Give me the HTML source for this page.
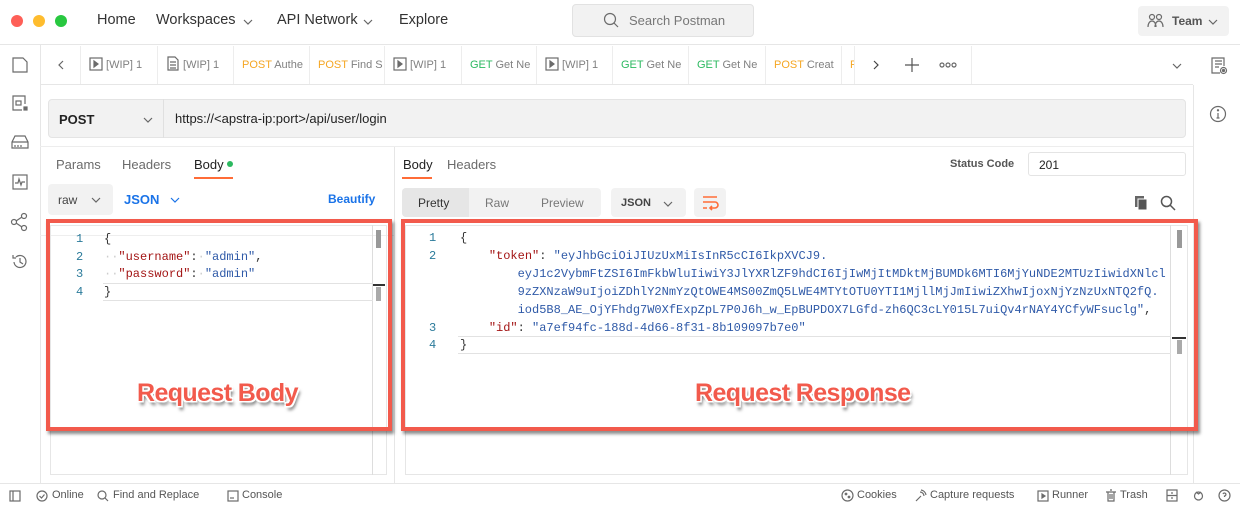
<!DOCTYPE html>
<html><head><meta charset="utf-8"><style>
*{box-sizing:border-box;margin:0;padding:0}
body{width:1240px;height:508px;overflow:hidden;background:#fff;font-family:"Liberation Sans",sans-serif;color:#212121;position:relative}
.a{position:absolute}
.t{font-size:13px;color:#6b6b6b}
.mono{font-family:"Liberation Mono",monospace;font-size:12px;white-space:pre}
.tab{position:absolute;top:46px;height:38px;border-right:1px solid #ededed;font-size:11px;color:#808080;line-height:38px;padding-left:8px;overflow:hidden;white-space:nowrap}
.post{color:#f5a623}.get{color:#2cb960}
.k{color:#a31515}.s{color:#2f5aa8}.n{color:#2a7a9a}
.lbl{font-family:"Liberation Sans",sans-serif;font-weight:bold;font-size:25px;color:#f25a4c;letter-spacing:-0.6px;text-shadow:-1.5px -1.5px 0 #fff,1.5px -1.5px 0 #fff,-1.5px 1.5px 0 #fff,1.5px 1.5px 0 #fff,2px 4px 3px rgba(0,0,0,.55)}
.ico{position:absolute;stroke:#6b6b6b;fill:none;stroke-width:1.2}
.chev{position:absolute;stroke:#666;fill:none;stroke-width:1.2}
.sb{position:absolute;top:489px;font-size:11px;color:#555}
.nav{position:absolute;top:12px;font-size:14.5px;color:#333}
</style></head><body>
<!-- top bar -->
<div class="a" style="left:0;top:44px;width:1240px;height:1px;background:#e6e6e6"></div>
<div class="a" style="left:11px;top:15px;width:12px;height:12px;border-radius:6px;background:#fe5f57"></div>
<div class="a" style="left:33px;top:15px;width:12px;height:12px;border-radius:6px;background:#febc2e"></div>
<div class="a" style="left:55px;top:15px;width:12px;height:12px;border-radius:6px;background:#28c840"></div>
<div class="nav" style="left:97px">Home</div>
<div class="nav" style="left:156px">Workspaces</div>
<svg class="chev" style="left:243px;top:19px" width="10" height="6"><path d="M1 1l4 4 4-4"/></svg>
<div class="nav" style="left:277px">API Network</div>
<svg class="chev" style="left:363px;top:19px" width="10" height="6"><path d="M1 1l4 4 4-4"/></svg>
<div class="nav" style="left:399px">Explore</div>
<div class="a" style="left:572px;top:4px;width:182px;height:33px;background:#f2f2f2;border:1px solid #e2e2e2;border-radius:4px"></div>
<svg class="ico" style="left:603px;top:12px" width="16" height="16"><circle cx="7" cy="7" r="5.5"/><path d="M11 11l4 4"/></svg>
<div class="a" style="left:629px;top:13px;font-size:13px;color:#777">Search Postman</div>
<div class="a" style="left:1138px;top:6px;width:91px;height:30px;background:#f2f2f2;border-radius:4px"></div>
<svg class="ico" style="left:1147px;top:13px" width="18" height="16"><circle cx="5" cy="4" r="2.5"/><circle cx="12" cy="4" r="2.5"/><path d="M1 14c0-4 2-6 4-6s4 2 4 6M8 14c0-4 2-6 4-6s4 2 4 6"/></svg>
<div class="a" style="left:1172px;top:14px;font-size:12px;font-weight:bold;color:#555">Team</div>
<svg class="chev" style="left:1208px;top:19px" width="10" height="6"><path d="M1 1l4 4 4-4"/></svg>

<!-- left sidebar -->
<div class="a" style="left:40px;top:45px;width:1px;height:438px;background:#e6e6e6"></div>
<svg class="ico" style="left:11px;top:56px" width="18" height="18"><path d="M2 2h10l4 4v10H2z"/></svg>
<svg class="ico" style="left:11px;top:94px" width="18" height="18"><path d="M14 10V2H2v14h9"/><rect x="5" y="7" width="5" height="4"/><rect x="13" y="13" width="3" height="3" fill="#6b6b6b"/></svg>
<svg class="ico" style="left:10px;top:134px" width="20" height="16"><path d="M2 8l3-6h10l3 6v6H2z M2 8h16M5 11v2M8 11v2M11 11v2"/></svg>
<svg class="ico" style="left:11px;top:173px" width="18" height="18"><rect x="2" y="2" width="14" height="14"/><path d="M4 10h3l1-4 2 6 1-3h3"/></svg>
<svg class="ico" style="left:10px;top:212px" width="20" height="20"><circle cx="4" cy="10" r="2.5"/><circle cx="14" cy="4" r="2.5"/><circle cx="14" cy="16" r="2.5"/><path d="M6 9l6-4M6 11l6 4"/></svg>
<svg class="ico" style="left:10px;top:252px" width="20" height="20"><path d="M4 10a6 6 0 1 0 2-5M3 3v3h3M10 6v4l3 2"/></svg>

<!-- tab bar -->
<div class="a" style="left:40px;top:84px;width:1153px;height:1px;background:#e6e6e6"></div>
<div class="a" style="left:80px;top:46px;width:1px;height:38px;background:#ededed"></div>
<svg class="chev" style="left:58px;top:60px" width="6" height="10"><path d="M5 1L1 5l4 4"/></svg>
<div class="tab" style="left:81px;width:77px"><svg class="ico" style="position:relative;top:3px" width="14" height="14"><rect x="1" y="1" width="12" height="12"/><path d="M5 4l4 3-4 3z" fill="#6b6b6b"/></svg> [WIP] 1</div>
<div class="tab" style="left:158px;width:76px"><svg class="ico" style="position:relative;top:3px" width="14" height="15"><path d="M2 1h7l3 3v10H2zM4 6h6M4 9h6M4 12h6"/></svg> [WIP] 1</div>
<div class="tab" style="left:234px;width:76px"><span class="post">POST</span> Authe</div>
<div class="tab" style="left:310px;width:75px"><span class="post">POST</span> Find S</div>
<div class="tab" style="left:385px;width:77px"><svg class="ico" style="position:relative;top:3px" width="14" height="14"><rect x="1" y="1" width="12" height="12"/><path d="M5 4l4 3-4 3z" fill="#6b6b6b"/></svg> [WIP] 1</div>
<div class="tab" style="left:462px;width:75px"><span class="get">GET</span> Get Ne</div>
<div class="tab" style="left:537px;width:76px"><svg class="ico" style="position:relative;top:3px" width="14" height="14"><rect x="1" y="1" width="12" height="12"/><path d="M5 4l4 3-4 3z" fill="#6b6b6b"/></svg> [WIP] 1</div>
<div class="tab" style="left:613px;width:76px"><span class="get">GET</span> Get Ne</div>
<div class="tab" style="left:689px;width:77px"><span class="get">GET</span> Get Ne</div>
<div class="tab" style="left:766px;width:76px"><span class="post">POST</span> Creat</div>
<div class="tab" style="left:842px;width:13px"><span class="post">P</span></div>
<svg class="chev" style="left:873px;top:60px;stroke:#444" width="6" height="10"><path d="M1 1l4 4-4 4"/></svg>
<svg class="chev" style="left:905px;top:58px;stroke:#555" width="14" height="14"><path d="M7 0v14M0 7h14"/></svg>
<svg class="chev" style="left:939px;top:62px" width="18" height="6"><circle cx="3" cy="3" r="2"/><circle cx="9" cy="3" r="2"/><circle cx="15" cy="3" r="2"/></svg>
<div class="a" style="left:971px;top:46px;width:1px;height:38px;background:#ededed"></div>
<svg class="chev" style="left:1172px;top:63px" width="10" height="6"><path d="M1 1l4 4 4-4"/></svg>
<svg class="ico" style="left:1210px;top:56px" width="18" height="20"><path d="M14 10V2H2v15h8M5 5h7M5 8h7M5 11h4"/><circle cx="13.5" cy="14.5" r="3"/><circle cx="13.5" cy="14.5" r="1" fill="#6b6b6b"/></svg>

<!-- right sidebar -->
<div class="a" style="left:1193px;top:85px;width:1px;height:398px;background:#e6e6e6"></div>
<svg class="ico" style="left:1209px;top:105px" width="18" height="18"><circle cx="9" cy="9" r="7.5"/><path d="M9 8v5M7.5 13h3"/><circle cx="9" cy="5.3" r=".6" fill="#6b6b6b"/></svg>

<!-- URL bar -->
<div class="a" style="left:48px;top:99px;width:1138px;height:39px;background:#f2f2f2;border:1px solid #e4e4e4;border-radius:4px"></div>
<div class="a" style="left:163px;top:99px;width:1px;height:39px;background:#e0e0e0"></div>
<div class="a" style="left:59px;top:112px;font-size:13px;font-weight:bold;color:#222">POST</div>
<svg class="chev" style="left:143px;top:117px" width="10" height="6"><path d="M1 1l4 4 4-4"/></svg>
<div class="a" style="left:175px;top:111px;font-size:13px;color:#222">https://&lt;apstra-ip:port&gt;/api/user/login</div>

<!-- request panel -->
<div class="a" style="left:40px;top:146px;width:1153px;height:1px;background:#ededed"></div>
<div class="a t" style="left:56px;top:157px">Params</div>
<div class="a t" style="left:122px;top:157px">Headers</div>
<div class="a" style="left:194px;top:157px;font-size:13px;color:#222">Body</div>
<div class="a" style="left:227px;top:161px;width:6px;height:6px;border-radius:3px;background:#2cb960"></div>
<div class="a" style="left:194px;top:177px;width:39px;height:2px;background:#ff6c37"></div>
<div class="a" style="left:394px;top:147px;width:1px;height:336px;background:#e6e6e6"></div>
<div class="a" style="left:48px;top:184px;width:65px;height:31px;background:#f2f2f2;border-radius:4px"></div>
<div class="a" style="left:58px;top:193px;font-size:12px;color:#444">raw</div>
<svg class="chev" style="left:91px;top:197px" width="10" height="6"><path d="M1 1l4 4 4-4"/></svg>
<div class="a" style="left:124px;top:192px;font-size:13px;font-weight:bold;color:#1a73e8">JSON</div>
<svg class="chev" style="left:170px;top:197px;stroke:#1a73e8" width="10" height="6"><path d="M1 1l4 4 4-4"/></svg>
<div class="a" style="left:328px;top:192px;font-size:12px;font-weight:bold;color:#1a73e8">Beautify</div>
<div class="a" style="left:40px;top:235px;width:354px;height:1px;background:#eee"></div>
<!-- request editor -->
<div class="a" style="left:50px;top:225px;width:337px;height:250px;border:1px solid #e6e6e6"></div>
<div class="a" style="left:372px;top:225px;width:1px;height:250px;background:#ddd"></div>
<div class="a" style="left:103px;top:283px;width:270px;height:18px;border-top:1px solid #e2e2e2;border-bottom:1px solid #e2e2e2"></div>
<div class="a" style="left:376px;top:230px;width:5px;height:18px;background:#999"></div>
<div class="a" style="left:373px;top:284px;width:12px;height:2px;background:#333"></div>
<div class="a" style="left:376px;top:287px;width:5px;height:14px;background:#aaa"></div>
<div class="a mono n" style="left:76px;top:231px;line-height:17.7px">1
2
3
4</div>
<div class="a mono" style="left:104px;top:231px;line-height:17.7px;color:#333">{
<span style="color:#ccc">··</span><span class="k">"username"</span>:<span style="color:#ccc">·</span><span class="s">"admin"</span>,
<span style="color:#ccc">··</span><span class="k">"password"</span>:<span style="color:#ccc">·</span><span class="s">"admin"</span>
}</div>
<div class="a" style="left:46px;top:219px;width:346px;height:212px;border:4px solid #f25a4c;box-shadow:2px 3px 3px rgba(0,0,0,.45)"></div>
<div class="a lbl" style="left:137px;top:379px">Request Body</div>

<!-- response panel -->
<div class="a" style="left:403px;top:157px;font-size:13px;color:#222">Body</div>
<div class="a t" style="left:447px;top:157px">Headers</div>
<div class="a" style="left:402px;top:177px;width:30px;height:2px;background:#ff6c37"></div>
<div class="a" style="left:950px;top:158px;font-size:11px;font-weight:bold;color:#555">Status Code</div>
<div class="a" style="left:1028px;top:152px;width:158px;height:24px;border:1px solid #e4e4e4;border-radius:3px;font-size:12px;padding:5px 10px;color:#222">201</div>
<div class="a" style="left:402px;top:188px;width:199px;height:29px;background:#f2f2f2;border-radius:4px"></div>
<div class="a" style="left:402px;top:188px;width:67px;height:29px;background:#e6e6e6;border-radius:4px 0 0 4px"></div>
<div class="a" style="left:418px;top:196px;font-size:12px;color:#333">Pretty</div>
<div class="a" style="left:485px;top:196px;font-size:12px;color:#777">Raw</div>
<div class="a" style="left:541px;top:196px;font-size:12px;color:#777">Preview</div>
<div class="a" style="left:611px;top:188px;width:75px;height:29px;background:#f2f2f2;border-radius:4px"></div>
<div class="a" style="left:621px;top:197px;font-size:11px;font-weight:bold;color:#444">JSON</div>
<svg class="chev" style="left:663px;top:201px" width="10" height="6"><path d="M1 1l4 4 4-4"/></svg>
<div class="a" style="left:694px;top:188px;width:32px;height:29px;background:#f2f2f2;border-radius:4px"></div>
<svg class="a" style="left:701px;top:194px" width="18" height="18" fill="none" stroke="#ff6c37" stroke-width="1.6"><path d="M2 3h14M2 8h12a3 3 0 0 1 0 6H9M11 12l-2 2 2 2M2 14h4"/></svg>
<svg class="a" style="left:1133px;top:195px" width="16" height="16"><rect x="2" y="1" width="9" height="11" fill="#666"/><rect x="5" y="4" width="9" height="11" fill="#555" stroke="#fff"/></svg>
<svg class="ico" style="left:1160px;top:195px;stroke:#555;stroke-width:1.5" width="16" height="16"><circle cx="6.5" cy="6.5" r="5"/><path d="M10 10l5 5"/></svg>
<!-- response editor -->
<div class="a" style="left:405px;top:225px;width:783px;height:250px;border:1px solid #e6e6e6"></div>
<div class="a" style="left:1170px;top:225px;width:1px;height:250px;background:#ddd"></div>
<div class="a" style="left:458px;top:336px;width:713px;height:18px;border-top:1px solid #e2e2e2;border-bottom:1px solid #e2e2e2"></div>
<div class="a" style="left:1177px;top:230px;width:5px;height:18px;background:#999"></div>
<div class="a" style="left:1172px;top:337px;width:14px;height:2px;background:#333"></div>
<div class="a" style="left:1177px;top:340px;width:5px;height:14px;background:#aaa"></div>
<div class="a mono n" style="left:429px;top:230px;line-height:17.9px">1
2


 
3
4</div>
<div class="a mono" style="left:460px;top:230px;line-height:17.9px;color:#333">{
    <span class="k">"token"</span>: <span class="s">"eyJhbGciOiJIUzUxMiIsInR5cCI6IkpXVCJ9.</span>
<span class="s">        eyJ1c2VybmFtZSI6ImFkbWluIiwiY3JlYXRlZF9hdCI6IjIwMjItMDktMjBUMDk6MTI6MjYuNDE2MTUzIiwidXNlcl</span>
<span class="s">        9zZXNzaW9uIjoiZDhlY2NmYzQtOWE4MS00ZmQ5LWE4MTYtOTU0YTI1MjllMjJmIiwiZXhwIjoxNjYzNzUxNTQ2fQ.</span>
<span class="s">        iod5B8_AE_OjYFhdg7W0XfExpZpL7P0J6h_w_EpBUPDOX7LGfd-zh6QC3cLY015L7uiQv4rNAY4YCfyWFsuclg"</span>,
    <span class="k">"id"</span>: <span class="s">"a7ef94fc-188d-4d66-8f31-8b109097b7e0"</span>
}</div>
<div class="a" style="left:401px;top:219px;width:797px;height:212px;border:4px solid #f25a4c;box-shadow:2px 3px 3px rgba(0,0,0,.45)"></div>
<div class="a lbl" style="left:695px;top:379px">Request Response</div>

<!-- status bar -->
<div class="a" style="left:0;top:483px;width:1240px;height:1px;background:#e6e6e6"></div>
<svg class="ico" style="left:9px;top:490px" width="12" height="12"><rect x="1" y="1" width="10" height="10"/><path d="M4 1v10"/></svg>
<svg class="ico" style="left:36px;top:490px" width="12" height="12"><circle cx="6" cy="6" r="5"/><path d="M3.5 6l2 2 3-3.5"/></svg>
<div class="sb" style="left:52px">Online</div>
<svg class="ico" style="left:97px;top:490px" width="12" height="12"><circle cx="5" cy="5" r="4"/><path d="M8 8l3 3"/></svg>
<div class="sb" style="left:113px">Find and Replace</div>
<svg class="ico" style="left:227px;top:490px" width="12" height="12"><rect x="1" y="1" width="10" height="10"/><path d="M3 8h4"/></svg>
<div class="sb" style="left:242px">Console</div>
<svg class="ico" style="left:841px;top:489px" width="13" height="13"><circle cx="6.5" cy="6.5" r="5.5"/><circle cx="5" cy="5" r=".8"/><circle cx="8" cy="8" r=".8"/></svg>
<div class="sb" style="left:857px">Cookies</div>
<svg class="ico" style="left:914px;top:489px" width="13" height="13"><path d="M2 12l5-5M6 3a4 4 0 0 1 4 4M7 1a6 6 0 0 1 5 5"/></svg>
<div class="sb" style="left:930px">Capture requests</div>
<svg class="ico" style="left:1037px;top:490px" width="12" height="12"><rect x="1" y="1" width="10" height="10"/><path d="M5 4l3 2-3 2z" fill="#6b6b6b"/></svg>
<div class="sb" style="left:1052px">Runner</div>
<svg class="ico" style="left:1105px;top:489px" width="12" height="13"><path d="M1 3h10M3 3v9h6V3M5 1h2M5 5v5M7 5v5"/></svg>
<div class="sb" style="left:1120px">Trash</div>
<svg class="ico" style="left:1166px;top:489px" width="12" height="13"><rect x="1" y="1" width="10" height="11"/><path d="M1 6.5h10M6 3v2M6 8v2"/></svg>
<svg class="ico" style="left:1192px;top:489px" width="13" height="13"><circle cx="6.5" cy="7" r="4"/><path d="M4 3l2.5 2 2.5-2"/></svg>
<svg class="ico" style="left:1218px;top:489px" width="13" height="13"><circle cx="6.5" cy="6.5" r="5.5"/><path d="M5 5a1.5 1.5 0 1 1 1.5 2v1"/></svg>
</body></html>
